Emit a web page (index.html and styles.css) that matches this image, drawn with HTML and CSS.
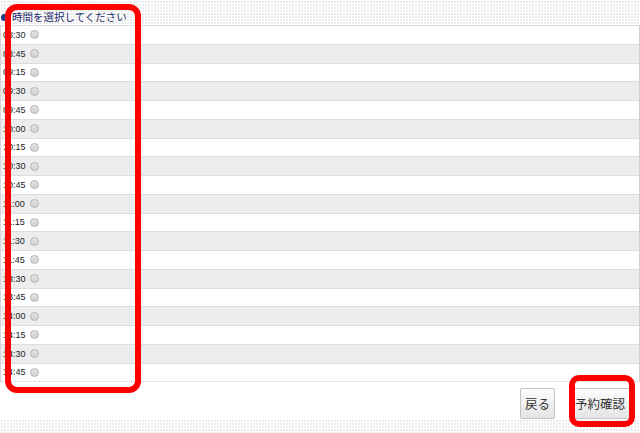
FILE: index.html
```html
<!DOCTYPE html>
<html lang="ja">

<head>
    <meta charset="UTF-8">
    <meta name="viewport" content="width=device-width, initial-scale=1.0">
    <title>時間を選択してください</title>
    <link rel="stylesheet" href="styles.css">
</head>

<body>
    <div class="band band-top">
        <h2 class="section-title"><span class="bullet"></span>時間を選択してください</h2>
    </div>

    <div class="time-table">
        <label class="time-row"><span class="time">08:30</span><input type="radio" name="time" value="08:30"></label>
        <label class="time-row"><span class="time">08:45</span><input type="radio" name="time" value="08:45"></label>
        <label class="time-row"><span class="time">09:15</span><input type="radio" name="time" value="09:15"></label>
        <label class="time-row"><span class="time">09:30</span><input type="radio" name="time" value="09:30"></label>
        <label class="time-row"><span class="time">09:45</span><input type="radio" name="time" value="09:45"></label>
        <label class="time-row"><span class="time">10:00</span><input type="radio" name="time" value="10:00"></label>
        <label class="time-row"><span class="time">10:15</span><input type="radio" name="time" value="10:15"></label>
        <label class="time-row"><span class="time">10:30</span><input type="radio" name="time" value="10:30"></label>
        <label class="time-row"><span class="time">10:45</span><input type="radio" name="time" value="10:45"></label>
        <label class="time-row"><span class="time">11:00</span><input type="radio" name="time" value="11:00"></label>
        <label class="time-row"><span class="time">11:15</span><input type="radio" name="time" value="11:15"></label>
        <label class="time-row"><span class="time">11:30</span><input type="radio" name="time" value="11:30"></label>
        <label class="time-row"><span class="time">11:45</span><input type="radio" name="time" value="11:45"></label>
        <label class="time-row"><span class="time">13:30</span><input type="radio" name="time" value="13:30"></label>
        <label class="time-row"><span class="time">13:45</span><input type="radio" name="time" value="13:45"></label>
        <label class="time-row"><span class="time">14:00</span><input type="radio" name="time" value="14:00"></label>
        <label class="time-row"><span class="time">14:15</span><input type="radio" name="time" value="14:15"></label>
        <label class="time-row"><span class="time">14:30</span><input type="radio" name="time" value="14:30"></label>
        <label class="time-row"><span class="time">14:45</span><input type="radio" name="time" value="14:45"></label>
    </div>

    <div class="actions">
        <button class="btn">戻る</button>
        <button class="btn">予約確認</button>
    </div>

    <div class="band band-bottom"></div>

    <!-- annotation marks -->
    <div class="mark mark-list"></div>
    <div class="mark mark-confirm"></div>
</body>

</html>
```

FILE: styles.css
```css
body {
    margin: 0;
    padding: 0;
    width: 640px;
    background-color: #fff;
    font-family: "Liberation Sans", Arial, "Noto Sans CJK JP", sans-serif;
    position: relative;
}

/* dotted background bands */
.band {
    background-color: #fff;
    background-image:
        linear-gradient(90deg, #fff 1px, transparent 1px),
        linear-gradient(#fff 1px, #ebebeb 1px);
    background-size: 3px 3px;
}

.band-top {
    height: 25px;
    display: flex;
    align-items: flex-end;
}

.band-bottom {
    height: 15px;
}

.section-title {
    margin: 0;
    padding-left: 1px;
    font-size: 10.5px;
    font-weight: normal;
    line-height: 16px;
    color: #1c2a6b;
    font-family: "Noto Sans CJK JP", sans-serif;
    display: flex;
    align-items: center;
    gap: 4px;
}

.bullet {
    width: 7px;
    height: 7px;
    border-radius: 50%;
    background-color: #1d3f8f;
}

.time-table {
    border-top: 1px solid #dcdcdc;
    border-left: 1px solid #d6d6d6;
    border-right: 1px solid #cfcfcf;
    border-bottom: 1px dotted #cfcfcf;
}

.time-row {
    display: flex;
    align-items: center;
    height: 17.75px;
    padding-left: 2px;
    border-bottom: 1px solid #dddddd;
    font-size: 9px;
    color: #222;
}

.time-row:last-child {
    border-bottom: none;
}

.time-row:nth-child(even) {
    background-color: #ededed;
}

.time {
    width: 27px;
}

input[type="radio"] {
    appearance: none;
    margin: 0;
    width: 9px;
    height: 9px;
    border: 1px solid #b4b4b4;
    border-radius: 50%;
    background: linear-gradient(#e4e4e4, #d0d0d0);
}

.actions {
    height: 37px;
    display: flex;
    justify-content: flex-end;
    align-items: center;
    gap: 15px;
    padding-right: 10px;
}

.btn {
    height: 31px;
    padding: 0 4px;
    border: 1px solid #c4c4c4;
    border-radius: 2px;
    background: linear-gradient(#fdfdfd, #e4e4e4);
    font-family: "Noto Sans CJK JP", sans-serif;
    font-size: 12.5px;
    color: #333;
    margin-top: 6px;
}

/* red annotation boxes drawn over the page */
.mark {
    position: absolute;
    border: 6px solid #ff0000;
    border-radius: 12px;
    box-sizing: border-box;
}

.mark-list {
    left: 5px;
    top: 4px;
    width: 136px;
    height: 389px;
}

.mark-confirm {
    left: 569px;
    top: 375px;
    width: 66px;
    height: 52px;
    border-radius: 10px;
}
```
